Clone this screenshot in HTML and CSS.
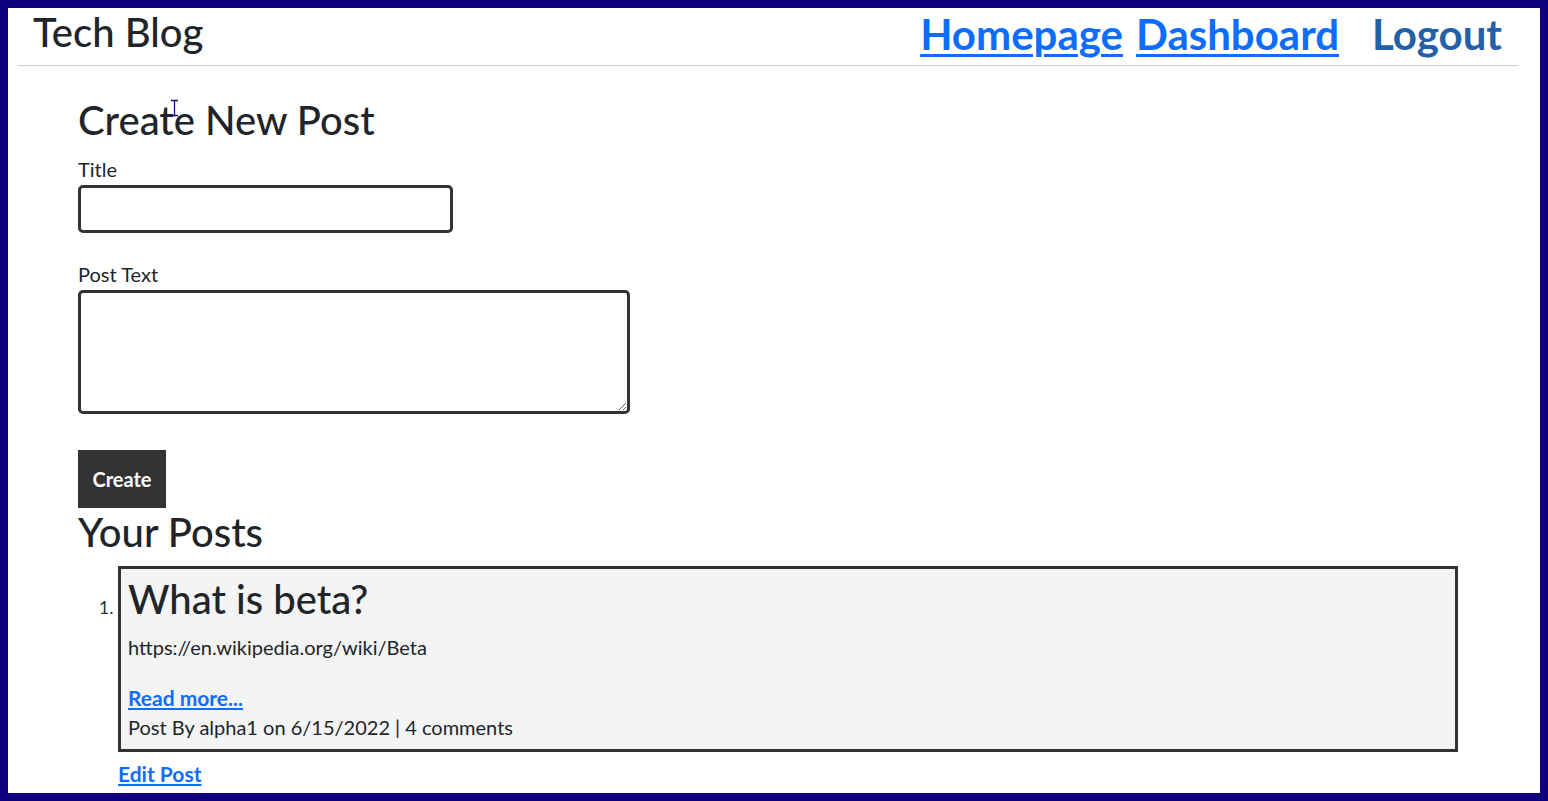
FILE: index.html
```html
<!DOCTYPE html>
<html lang="en">
<head>
<meta charset="utf-8">
<title>Tech Blog</title>
<link rel="stylesheet" href="styles.css">
</head>
<body>
<div class="frame">
  <header class="site-header">
    <h1 class="brand">Tech Blog</h1>
    <nav class="nav">
      <a class="nav-link" href="#">Homepage</a>
      <a class="nav-link" href="#">Dashboard</a>
      <span class="nav-logout">Logout</span>
    </nav>
  </header>
  <main class="main">
    <h2 class="heading">Create New Post</h2>
    <form class="post-form">
      <label class="field-label" for="title">Title</label>
      <input class="title-input" id="title" type="text">
      <label class="field-label field-label-gap" for="body">Post Text</label>
      <textarea class="body-input" id="body"></textarea>
      <button class="create-btn" type="button">Create</button>
    </form>
    <h2 class="heading">Your Posts</h2>
    <ol class="post-list">
      <li class="post-item">
        <article class="post-card">
          <h3 class="post-title">What is beta?</h3>
          <p class="post-text">https://en.wikipedia.org/wiki/Beta</p>
          <a class="read-more" href="#">Read more...</a>
          <p class="post-meta">Post By alpha1 on 6/15/2022 | 4 comments</p>
        </article>
        <a class="edit-link" href="#">Edit Post</a>
      </li>
    </ol>
  </main>
  <svg class="cursor" width="9" height="18" viewBox="0 0 9 18" aria-hidden="true">
    <path d="M1 1.5h2.5M5.5 1.5H8M4.5 2v14M1 16.5h2.5M5.5 16.5H8M3.5 1.5h2M3.5 16.5h2" stroke="#1a0a8c" stroke-width="1.3" fill="none"/>
  </svg>
</div>
</body>
</html>
```
FILE: styles.css
```css
* { box-sizing: border-box; }

html, body {
  margin: 0;
  padding: 0;
  background: #10007f;
}

body {
  font-family: Lato, "Open Sans", sans-serif;
  color: #212529;
  font-size: 20px;
  line-height: 30px;
}

.frame {
  position: relative;
  height: 801px;
  border: 8px solid #10007f;
  background: #fff;
  overflow: hidden;
}

/* Header */
.site-header {
  display: flex;
  justify-content: space-between;
  align-items: flex-start;
  height: 58px;
  margin: 0 22px 0 10px;
  padding: 0 16px 0 15px;
  border-bottom: 1px solid #cfcfcf;
}

.brand {
  margin: 0;
  font-size: 40px;
  line-height: 48px;
  font-weight: 500;
  color: #212529;
}

.nav {
  display: flex;
  align-items: flex-start;
  font-size: 42px;
  line-height: 52px;
  font-weight: 700;
}

.nav-link {
  color: #0d6efd;
  text-decoration: underline;
  text-decoration-thickness: 3px;
  text-underline-offset: 4px;
  margin-right: 13px;
}

.nav-link + .nav-link {
  margin-right: 33px;
}

.nav-logout {
  color: #2360a8;
}

/* Main */
.main {
  padding: 0 82px 0 70px;
}

.heading {
  margin: 30px 0 0;
  font-size: 40px;
  line-height: 48px;
  font-weight: 500;
}

.main > .heading:nth-of-type(2) {
  margin-top: 0;
}

.post-form {
  display: flex;
  flex-direction: column;
  align-items: flex-start;
  margin-top: 10px;
}

.field-label {
  display: block;
  line-height: 31px;
}

.field-label-gap {
  margin-top: 26px;
}

.title-input {
  width: 375px;
  height: 48px;
  border: 3px solid #333;
  border-radius: 5px;
  background: #fff;
  font: inherit;
  padding: 0 8px;
  margin: 0;
}

.body-input {
  width: 552px;
  height: 124px;
  border: 3px solid #333;
  border-radius: 5px;
  background: #fff;
  font: inherit;
  padding: 4px 8px;
  margin: 0;
  display: block;
}

.create-btn {
  margin-top: 36px;
  width: 88px;
  height: 58px;
  border: 0;
  border-radius: 0;
  background: #333;
  color: #fff;
  font-family: inherit;
  font-size: 20px;
  font-weight: 700;
  padding: 0;
}

/* Posts */
.post-list {
  margin: 10px 0 0;
  padding-left: 40px;
}

.post-item::marker {
  font-size: 18px;
  color: #333;
}

.post-card {
  border: 3px solid #333;
  background: #f4f4f4;
  padding: 6px 7px 7px;
}

.post-title {
  margin: 0;
  font-size: 40px;
  line-height: 48px;
  font-weight: 500;
}

.post-text {
  margin: 9px 0 21px;
}

.read-more,
.edit-link {
  color: #0d6efd;
  font-weight: 700;
  font-size: 21px;
  text-decoration: underline;
  text-underline-offset: 2px;
}

.read-more {
  display: block;
  line-height: 29px;
}

.post-meta {
  margin: 0;
}

.edit-link {
  display: inline-block;
  margin-top: 7px;
}

.cursor {
  position: absolute;
  left: 162px;
  top: 91px;
}
```
